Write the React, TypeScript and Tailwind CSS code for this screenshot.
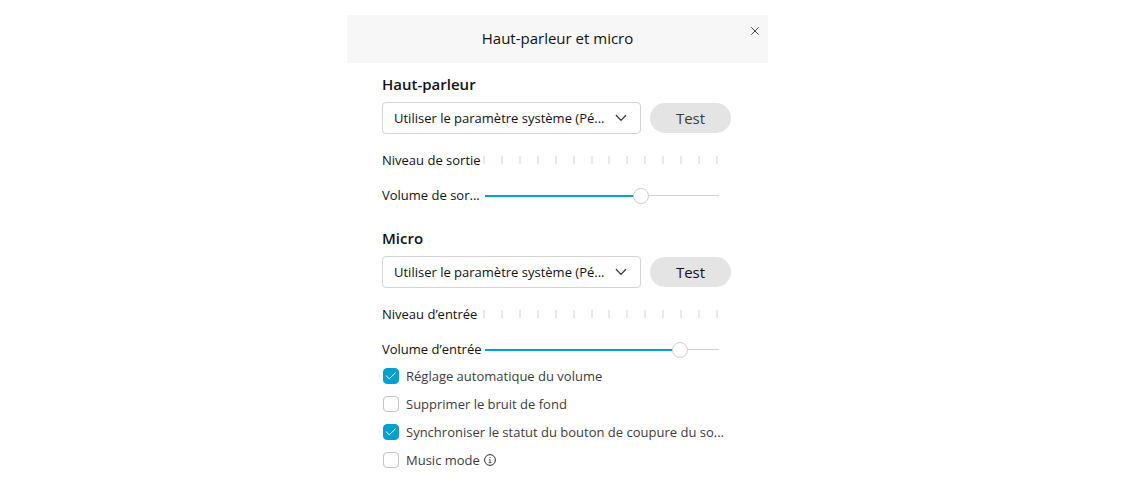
import { useId, useState } from "react";

const OUTPUT_DEVICE = "Utiliser le paramètre système (Pé...";
const TICKS = Array.from({ length: 14 }, (_, i) => i);

function DeviceRow({ label, muted }: { label: string; muted?: boolean }) {
  return (
    <div className="flex items-center gap-[9px]">
      <div className="grid h-8 min-w-0 flex-1 items-center">
        <select
          aria-label={label}
          className="col-start-1 row-start-1 h-8 w-full appearance-none rounded border border-[#d4d4d4] bg-white pt-0.5 pr-8 pl-[11px] text-[13px] text-[#121212]"
        >
          <option>{OUTPUT_DEVICE}</option>
        </select>
        <svg
          viewBox="0 0 12 8"
          className="pointer-events-none col-start-1 row-start-1 mr-3.5 h-2 w-3 justify-self-end"
          fill="none"
          stroke="#333"
          strokeWidth="1.2"
          strokeLinecap="round"
          strokeLinejoin="round"
          aria-hidden="true"
        >
          <path d="M1.3 1.5 6 6.3l4.7-4.8" />
        </svg>
      </div>
      <button
        type="button"
        className={`h-[30px] w-[81px] rounded-full bg-[#e4e4e4] text-[15px] ${muted ? "text-[#3c3c3c]" : "text-[#121212]"}`}
      >
        Test
      </button>
    </div>
  );
}

function LevelRow({ label }: { label: string }) {
  return (
    <div className="mt-3.5 flex h-6 items-center pr-[13px]">
      <span className="w-[101px] shrink-0 pt-0.5 text-[13px] whitespace-nowrap">{label}</span>
      <div className="flex h-2 flex-1 justify-between" role="meter" aria-label={label} aria-valuenow={0}>
        {TICKS.map((i) => (
          <span key={i} className="w-0.5 bg-[#e9e9e9]" />
        ))}
      </div>
    </div>
  );
}

function VolumeRow({ label, initial }: { label: string; initial: number }) {
  const id = useId();
  const [value, setValue] = useState(initial);
  return (
    <div className="mt-3 flex h-6 items-center pr-3">
      <label htmlFor={id} className="w-[103px] shrink-0 text-[13px] whitespace-nowrap">
        {label}
      </label>
      <input
        id={id}
        type="range"
        min={0}
        max={100}
        value={value}
        onChange={(e) => setValue(Number(e.target.value))}
        className="h-4 min-w-0 flex-1 appearance-none bg-[linear-gradient(#049fd9,#049fd9),linear-gradient(#d0d0d0,#d0d0d0)] bg-[position:0_7px] bg-no-repeat [&::-webkit-slider-thumb]:size-4 [&::-webkit-slider-thumb]:appearance-none [&::-webkit-slider-thumb]:rounded-full [&::-webkit-slider-thumb]:border [&::-webkit-slider-thumb]:border-[#d0d0d0] [&::-webkit-slider-thumb]:bg-white"
        style={{ backgroundSize: `${value}% 2px, 100% 1px` }}
      />
    </div>
  );
}

function CheckRow({ label, checked, info }: { label: string; checked?: boolean; info?: boolean }) {
  const id = useId();
  return (
    <div className="flex h-6 items-center pl-px">
      <span className="grid size-4 shrink-0 place-items-center">
        <input
          id={id}
          type="checkbox"
          defaultChecked={checked}
          className="peer col-start-1 row-start-1 size-4 appearance-none rounded border border-[#c4c4c4] bg-white checked:border-[#00a0d1] checked:bg-[#00a0d1]"
        />
        <svg
          viewBox="0 0 16 16"
          className="pointer-events-none invisible col-start-1 row-start-1 size-4 peer-checked:visible"
          fill="none"
          stroke="#fff"
          strokeWidth="1"
          strokeLinecap="round"
          strokeLinejoin="round"
          aria-hidden="true"
        >
          <path d="M3.4 8 6.3 10.8l6.1-5.9" />
        </svg>
      </span>
      <label htmlFor={id} className="pt-0.5 pl-[7px] text-[13px] whitespace-nowrap text-[#3c3c3c]">
        {label}
      </label>
      {info && (
        <svg viewBox="0 0 12 12" className="ml-1 size-3" fill="none" stroke="#2e2e2e" aria-hidden="true">
          <circle cx="6" cy="6" r="5.4" />
          <path d="M4.9 5.4H6v3.2M4.7 8.7h2.7" strokeWidth="0.8" />
          <circle cx="6" cy="3.5" r="0.6" fill="#2e2e2e" stroke="none" />
        </svg>
      )}
    </div>
  );
}

export default function App() {
  return (
    <main className="flex min-h-screen justify-center bg-white pt-[15px] pr-[17px] font-['Open_Sans','Noto_Sans',sans-serif] text-[#121212]">
      <section aria-labelledby="dialog-title" className="w-full max-w-[421px]">
        <header className="grid h-12 items-center bg-[#f7f7f7]">
          <h1 id="dialog-title" className="col-start-1 row-start-1 pb-0.5 text-center text-[15px]">
            Haut-parleur et micro
          </h1>
          <button
            type="button"
            aria-label="Fermer"
            className="col-start-1 row-start-1 mt-2 mr-[5px] grid size-4 place-items-center self-start justify-self-end"
          >
            <svg viewBox="0 0 8 8" className="size-2" stroke="#333" strokeWidth="0.9" aria-hidden="true">
              <path d="m.3.3 7.4 7.4M7.7.3.3 7.7" />
            </svg>
          </button>
        </header>

        <div className="pt-[9px] pr-[37px] pb-6 pl-[35px]">
          <h2 className="mb-1.5 text-[15px] leading-6 font-semibold">Haut-parleur</h2>
          <DeviceRow label="Haut-parleur" muted />
          <LevelRow label="Niveau de sortie" />
          <VolumeRow label="Volume de sor..." initial={68} />

          <h2 className="mt-[18px] mb-1.5 text-[15px] leading-6 font-semibold">Micro</h2>
          <DeviceRow label="Micro" />
          <LevelRow label="Niveau d’entrée" />
          <VolumeRow label="Volume d’entrée" initial={86} />

          <div className="mt-0.5 flex flex-col gap-1">
            <CheckRow label="Réglage automatique du volume" checked />
            <CheckRow label="Supprimer le bruit de fond" />
            <CheckRow label="Synchroniser le statut du bouton de coupure du so..." checked />
            <CheckRow label="Music mode" info />
          </div>
        </div>
      </section>
    </main>
  );
}
